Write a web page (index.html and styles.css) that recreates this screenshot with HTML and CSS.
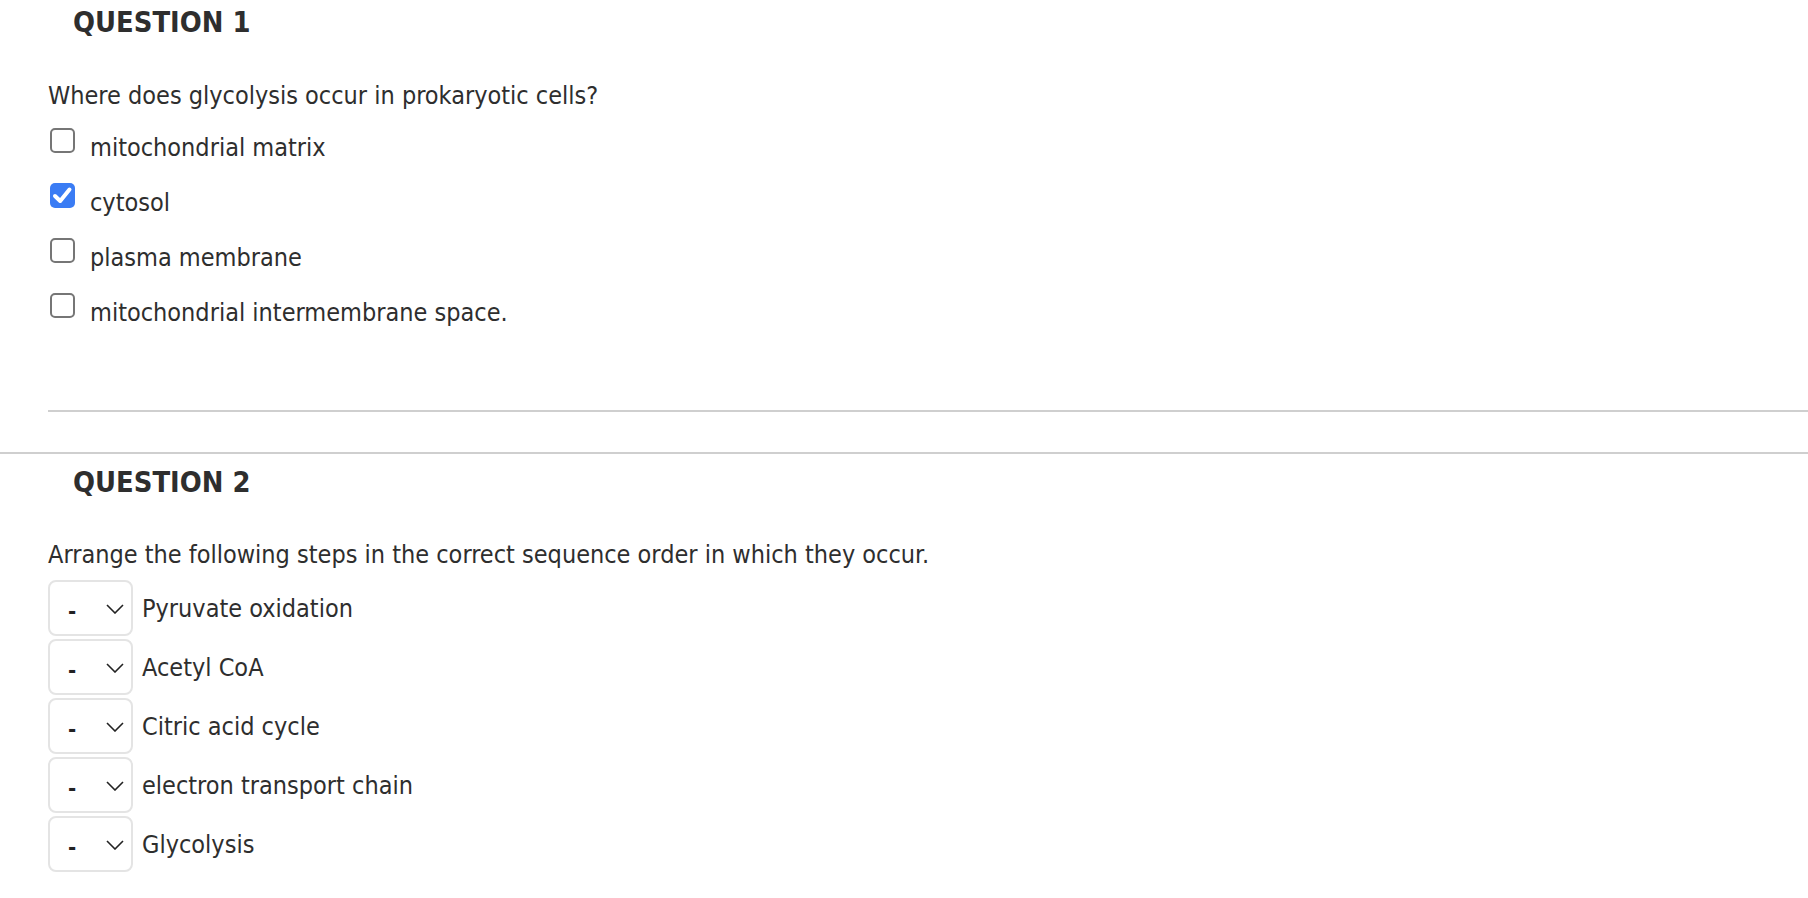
FILE: index.html
```html
<!DOCTYPE html>
<html>
<head>
<meta charset="utf-8">
<link rel="stylesheet" href="styles.css">
</head>
<body>
<section class="question q1">
  <h2 class="heading">QUESTION 1</h2>
  <p class="prompt">Where does glycolysis occur in prokaryotic cells?</p>
  <ul class="options">
    <li class="option"><span class="box"></span><span class="label">mitochondrial matrix</span></li>
    <li class="option"><span class="box checked"><svg viewBox="0 0 25 25" width="25" height="25"><path d="M5 13 L10.2 18 L19.5 6.5" fill="none" stroke="#fff" stroke-width="4" stroke-linecap="round" stroke-linejoin="round"/></svg></span><span class="label">cytosol</span></li>
    <li class="option"><span class="box"></span><span class="label">plasma membrane</span></li>
    <li class="option"><span class="box"></span><span class="label">mitochondrial intermembrane space.</span></li>
  </ul>
  <hr class="rule">
</section>
<section class="question q2">
  <h2 class="heading">QUESTION 2</h2>
  <p class="prompt">Arrange the following steps in the correct sequence order in which they occur.</p>
  <ul class="steps">
    <li class="step"><span class="select"><span class="dash">-</span><svg class="chev" viewBox="0 0 18 10" width="18" height="10"><path d="M1 1 L9 9 L17 1" fill="none" stroke="#222" stroke-width="1.6"/></svg></span><span class="label">Pyruvate oxidation</span></li>
    <li class="step"><span class="select"><span class="dash">-</span><svg class="chev" viewBox="0 0 18 10" width="18" height="10"><path d="M1 1 L9 9 L17 1" fill="none" stroke="#222" stroke-width="1.6"/></svg></span><span class="label">Acetyl CoA</span></li>
    <li class="step"><span class="select"><span class="dash">-</span><svg class="chev" viewBox="0 0 18 10" width="18" height="10"><path d="M1 1 L9 9 L17 1" fill="none" stroke="#222" stroke-width="1.6"/></svg></span><span class="label">Citric acid cycle</span></li>
    <li class="step"><span class="select"><span class="dash">-</span><svg class="chev" viewBox="0 0 18 10" width="18" height="10"><path d="M1 1 L9 9 L17 1" fill="none" stroke="#222" stroke-width="1.6"/></svg></span><span class="label">electron transport chain</span></li>
    <li class="step"><span class="select"><span class="dash">-</span><svg class="chev" viewBox="0 0 18 10" width="18" height="10"><path d="M1 1 L9 9 L17 1" fill="none" stroke="#222" stroke-width="1.6"/></svg></span><span class="label">Glycolysis</span></li>
  </ul>
</section>
</body>
</html>
```
FILE: styles.css
```css
html, body {
  margin: 0;
  padding: 0;
  background: #fff;
}
body {
  font-family: "DejaVu Sans Condensed", "DejaVu Sans", sans-serif;
  color: #2e2e2e;
  font-size: 25px;
}
.question {
  padding-left: 48px;
}
.q2 {
  border-top: 2px solid #cfcfcf;
  margin-top: 40px;
  padding-top: 6px;
}
.heading {
  margin: 0 0 0 25px;
  font-size: 28.8px;
  font-weight: bold;
  line-height: 44px;
  color: #2e2e2e;
}
.prompt {
  margin: 37px 0 0 0;
  line-height: 30px;
}
.q2 .prompt {
  margin-top: 36px;
}
.options, .steps {
  list-style: none;
  margin: 0;
  padding: 0;
}
.options {
  margin-top: 9px;
}
.option {
  display: flex;
  align-items: flex-start;
  height: 55px;
}
.box {
  box-sizing: border-box;
  width: 25px;
  height: 25px;
  margin: 8px 0 0 2px;
  border: 2px solid #767676;
  border-radius: 5px;
  display: flex;
  align-items: center;
  justify-content: center;
  overflow: hidden;
}
.box.checked {
  background: #3a7cf4;
  border: 0;
}
.option .label {
  line-height: 55px;
  margin-left: 15px;
}
.rule {
  margin: 70px 0 0 0;
  border: 0;
  border-top: 2px solid #cfcfcf;
  height: 0;
}
.steps {
  margin-top: 10px;
  display: flex;
  flex-direction: column;
  gap: 3px;
}
.step {
  display: flex;
  align-items: center;
  height: 56px;
}
.select {
  box-sizing: border-box;
  width: 85px;
  height: 56px;
  border: 2px solid #e4e4e4;
  border-radius: 8px;
  display: flex;
  align-items: center;
  padding-left: 18px;
}
.dash {
  font-weight: bold;
  font-size: 22px;
  color: #222;
  margin-top: 6px;
}
.chev {
  margin-left: 30px;
  margin-top: 2px;
}
.step .label {
  margin-left: 9px;
}
```
